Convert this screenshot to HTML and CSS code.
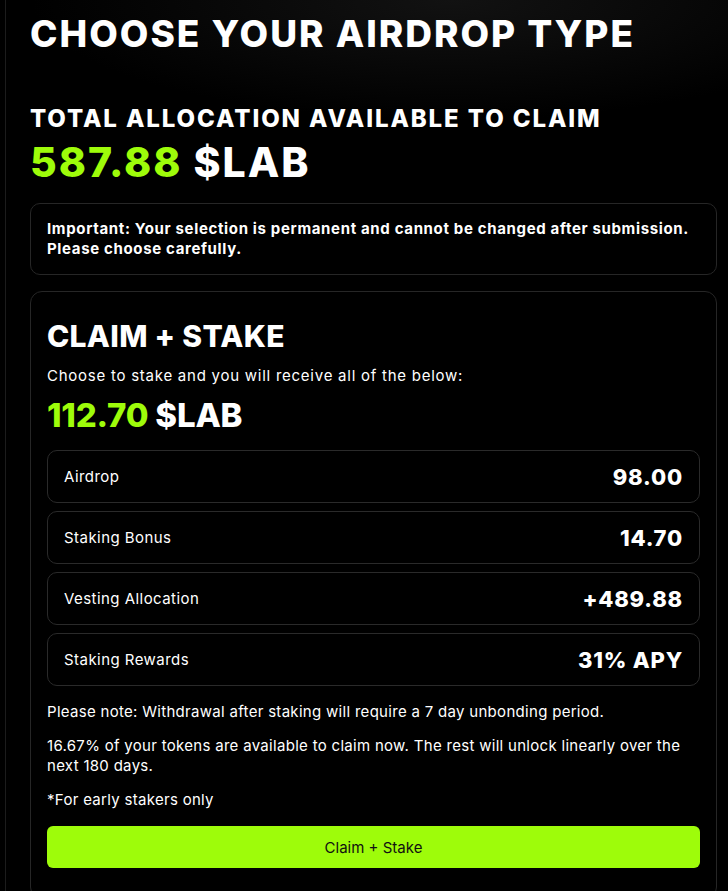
FILE: index.html
```html
<!DOCTYPE html>
<html lang="en">
<head>
<meta charset="utf-8">
<title>Choose your airdrop type</title>
<link rel="stylesheet" href="styles.css">
</head>
<body>
<main class="page">
  <h1 class="title">CHOOSE YOUR AIRDROP TYPE</h1>
  <h2 class="subtitle">TOTAL ALLOCATION AVAILABLE TO CLAIM</h2>
  <div class="total"><span class="green">587.88</span> $LAB</div>

  <div class="notice">
    Important: Your selection is permanent and cannot be changed after submission.<br>
    Please choose carefully.
  </div>

  <section class="card">
    <h3 class="card-title">CLAIM + STAKE</h3>
    <p class="lead">Choose to stake and you will receive all of the below:</p>
    <div class="amount"><span class="green">112.70</span> $LAB</div>

    <div class="rows">
      <div class="row"><span class="label">Airdrop</span><span class="value">98.00</span></div>
      <div class="row"><span class="label">Staking Bonus</span><span class="value">14.70</span></div>
      <div class="row"><span class="label">Vesting Allocation</span><span class="value">+489.88</span></div>
      <div class="row"><span class="label">Staking Rewards</span><span class="value">31% APY</span></div>
    </div>

    <p class="note first">Please note: Withdrawal after staking will require a 7 day unbonding period.</p>
    <p class="note">16.67% of your tokens are available to claim now. The rest will unlock linearly over the next 180 days.</p>
    <p class="note">*For early stakers only</p>

    <button class="cta" type="button">Claim + Stake</button>
  </section>
</main>
</body>
</html>
```

FILE: styles.css
```css
* { box-sizing: border-box; }

html, body {
  margin: 0;
  padding: 0;
  background: #000;
}

body {
  font-family: Inter, "Noto Sans", sans-serif;
  color: #fff;
  background: radial-gradient(ellipse 420px 120px at 62% 0%, #121212 0%, #000 100%) no-repeat, #000;
  min-height: 891px;
}

.page {
  margin-left: 5px;
  border-left: 1px solid #1c1c1c;
  padding: 12px 11px 0 24px;
  min-height: 891px;
}

.green { color: #9efc0a; }

.title {
  margin: 0;
  font-size: 37px;
  line-height: 44px;
  font-weight: 800;
  letter-spacing: 2px;
}

.subtitle {
  margin: 48px 0 0;
  font-size: 24px;
  line-height: 30px;
  font-weight: 800;
  letter-spacing: 1.9px;
}

.total {
  margin-top: 4px;
  font-size: 41px;
  line-height: 48px;
  font-weight: 800;
  letter-spacing: 2px;
}

.notice {
  margin-top: 17px;
  border: 1px solid #262626;
  border-radius: 10px;
  padding: 15px 16px;
  font-size: 15px;
  line-height: 20px;
  font-weight: 700;
  letter-spacing: 0.65px;
}

.card {
  margin-top: 16px;
  border: 1px solid #262626;
  border-radius: 12px;
  padding: 26px 16px 30px;
}

.card-title {
  margin: 0;
  font-size: 30px;
  line-height: 36px;
  font-weight: 800;
  letter-spacing: 0.3px;
}

.lead {
  margin: 12px 0 0;
  font-size: 15px;
  line-height: 20px;
  letter-spacing: 0.75px;
}

.amount {
  margin-top: 9px;
  font-size: 33px;
  line-height: 40px;
  font-weight: 800;
  letter-spacing: -0.2px;
}

.rows {
  margin-top: 15px;
  display: flex;
  flex-direction: column;
  gap: 8px;
}

.row {
  height: 53px;
  border: 1px solid #2a2a2a;
  border-radius: 10px;
  padding: 0 16px;
  display: flex;
  align-items: center;
  justify-content: space-between;
}

.label {
  font-size: 15px;
  letter-spacing: 0.45px;
}

.value {
  font-size: 22px;
  font-weight: 800;
  letter-spacing: 0.8px;
}

.note {
  margin: 14px 0 0;
  font-size: 15px;
  line-height: 20px;
  letter-spacing: 0.3px;
}

.note.first { margin-top: 16px; }

.cta {
  display: block;
  width: 100%;
  margin-top: 16px;
  height: 42px;
  border: 0;
  border-radius: 6px;
  background: #9efc0a;
  color: #111;
  font-family: Inter, "Noto Sans", sans-serif;
  font-size: 15px;
  cursor: pointer;
}
```
